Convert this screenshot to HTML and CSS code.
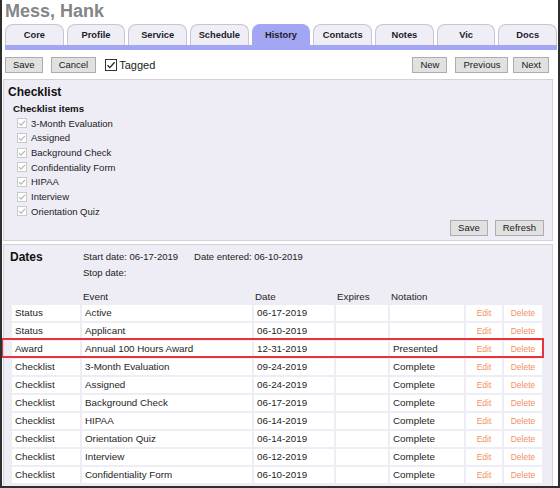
FILE: index.html
```html
<!DOCTYPE html>
<html>
<head>
<meta charset="utf-8">
<link rel="stylesheet" href="styles.css">
</head>
<body>
<div class="frame">
  <h1 class="title">Mess, Hank</h1>
  <nav class="tabs">
    <span class="tab">Core</span>
    <span class="tab">Profile</span>
    <span class="tab">Service</span>
    <span class="tab">Schedule</span>
    <span class="tab active">History</span>
    <span class="tab">Contacts</span>
    <span class="tab">Notes</span>
    <span class="tab">Vic</span>
    <span class="tab">Docs</span>
  </nav>
  <div class="tabbar"></div>

  <div class="toolbar">
    <div class="group">
      <button class="btn">Save</button>
      <button class="btn">Cancel</button>
      <label class="tagged">
        <svg class="cb-tag" width="12" height="12" viewBox="0 0 12 12"><rect x="0.5" y="0.5" width="11" height="11" fill="#fff" stroke="#333"/><path d="M2.5 6.2 L4.8 8.6 L9.6 3.2" fill="none" stroke="#222" stroke-width="1.3"/></svg>
        Tagged
      </label>
    </div>
    <div class="group right">
      <button class="btn">New</button>
      <button class="btn">Previous</button>
      <button class="btn next">Next</button>
    </div>
  </div>

  <section class="panel checklist">
    <h2 class="panel-title">Checklist</h2>
    <h3 class="sub-title">Checklist items</h3>
    <ul class="items">
      <li><svg class="cb" width="10" height="10" viewBox="0 0 10 10"><rect x="0.5" y="0.5" width="9" height="9" fill="#fff" stroke="#c9c9c9"/><path d="M2 5.2 L4 7.2 L8 2.8" fill="none" stroke="#b4b4b4" stroke-width="1.1"/></svg>3-Month Evaluation</li>
      <li><svg class="cb" width="10" height="10" viewBox="0 0 10 10"><rect x="0.5" y="0.5" width="9" height="9" fill="#fff" stroke="#c9c9c9"/><path d="M2 5.2 L4 7.2 L8 2.8" fill="none" stroke="#b4b4b4" stroke-width="1.1"/></svg>Assigned</li>
      <li><svg class="cb" width="10" height="10" viewBox="0 0 10 10"><rect x="0.5" y="0.5" width="9" height="9" fill="#fff" stroke="#c9c9c9"/><path d="M2 5.2 L4 7.2 L8 2.8" fill="none" stroke="#b4b4b4" stroke-width="1.1"/></svg>Background Check</li>
      <li><svg class="cb" width="10" height="10" viewBox="0 0 10 10"><rect x="0.5" y="0.5" width="9" height="9" fill="#fff" stroke="#c9c9c9"/><path d="M2 5.2 L4 7.2 L8 2.8" fill="none" stroke="#b4b4b4" stroke-width="1.1"/></svg>Confidentiality Form</li>
      <li><svg class="cb" width="10" height="10" viewBox="0 0 10 10"><rect x="0.5" y="0.5" width="9" height="9" fill="#fff" stroke="#c9c9c9"/><path d="M2 5.2 L4 7.2 L8 2.8" fill="none" stroke="#b4b4b4" stroke-width="1.1"/></svg>HIPAA</li>
      <li><svg class="cb" width="10" height="10" viewBox="0 0 10 10"><rect x="0.5" y="0.5" width="9" height="9" fill="#fff" stroke="#c9c9c9"/><path d="M2 5.2 L4 7.2 L8 2.8" fill="none" stroke="#b4b4b4" stroke-width="1.1"/></svg>Interview</li>
      <li><svg class="cb" width="10" height="10" viewBox="0 0 10 10"><rect x="0.5" y="0.5" width="9" height="9" fill="#fff" stroke="#c9c9c9"/><path d="M2 5.2 L4 7.2 L8 2.8" fill="none" stroke="#b4b4b4" stroke-width="1.1"/></svg>Orientation Quiz</li>
    </ul>
    <div class="panel-actions">
      <button class="btn">Save</button>
      <button class="btn">Refresh</button>
    </div>
  </section>

  <section class="panel dates">
    <div class="dates-head">
      <h2 class="panel-title dates-title">Dates</h2>
      <div class="info">
        <div class="info-line"><span>Start date: 06-17-2019</span><span class="entered">Date entered: 06-10-2019</span></div>
        <div class="info-line">Stop date:</div>
      </div>
    </div>
    <table class="grid">
      <colgroup>
        <col class="c-type"><col class="c-event"><col class="c-date"><col class="c-exp"><col class="c-note"><col class="c-edit"><col class="c-del">
      </colgroup>
      <thead>
        <tr><th></th><th>Event</th><th>Date</th><th>Expires</th><th>Notation</th><th></th><th></th></tr>
      </thead>
      <tbody>
        <tr><td>Status</td><td>Active</td><td>06-17-2019</td><td></td><td></td><td class="act">Edit</td><td class="act">Delete</td></tr>
        <tr><td>Status</td><td>Applicant</td><td>06-10-2019</td><td></td><td></td><td class="act">Edit</td><td class="act">Delete</td></tr>
        <tr><td>Award</td><td>Annual 100 Hours Award</td><td>12-31-2019</td><td></td><td>Presented</td><td class="act">Edit</td><td class="act">Delete</td></tr>
        <tr><td>Checklist</td><td>3-Month Evaluation</td><td>09-24-2019</td><td></td><td>Complete</td><td class="act">Edit</td><td class="act">Delete</td></tr>
        <tr><td>Checklist</td><td>Assigned</td><td>06-24-2019</td><td></td><td>Complete</td><td class="act">Edit</td><td class="act">Delete</td></tr>
        <tr><td>Checklist</td><td>Background Check</td><td>06-17-2019</td><td></td><td>Complete</td><td class="act">Edit</td><td class="act">Delete</td></tr>
        <tr><td>Checklist</td><td>HIPAA</td><td>06-14-2019</td><td></td><td>Complete</td><td class="act">Edit</td><td class="act">Delete</td></tr>
        <tr><td>Checklist</td><td>Orientation Quiz</td><td>06-14-2019</td><td></td><td>Complete</td><td class="act">Edit</td><td class="act">Delete</td></tr>
        <tr><td>Checklist</td><td>Interview</td><td>06-12-2019</td><td></td><td>Complete</td><td class="act">Edit</td><td class="act">Delete</td></tr>
        <tr><td>Checklist</td><td>Confidentiality Form</td><td>06-10-2019</td><td></td><td>Complete</td><td class="act">Edit</td><td class="act">Delete</td></tr>
      </tbody>
    </table>
    <div class="highlight"></div>
  </section>
</div>
</body>
</html>
```

FILE: styles.css
```css
* { box-sizing: border-box; }
html, body { margin: 0; padding: 0; background: #fff; }
body { font-family: "Liberation Sans", Arial, sans-serif; color: #1e1e1e; }

.frame {
  position: relative;
  width: 560px;
  height: 488px;
  overflow: hidden;
  background: #fff;
  border-left: 2px solid #2e2e2e;
  border-right: 2px solid #2e2e2e;
  border-bottom: 2px solid #2e2e2e;
}

.title {
  margin: 0;
  padding-left: 3px;
  font-size: 18px;
  line-height: 22px;
  font-weight: bold;
  color: #858585;
}

.tabs {
  display: flex;
  gap: 3px;
  margin: 2px 1px 0 3px;
}
.tab {
  flex: 1 1 0;
  height: 21px;
  line-height: 20px;
  text-align: center;
  font-size: 9.3px;
  font-weight: bold;
  color: #1c1c2a;
  background: #efeef6;
  border: 1px solid #c6c6d4;
  border-bottom: none;
  border-radius: 8px 8px 0 0;
}
.tab.active {
  background: #a3a6f3;
  border-color: #a3a6f3;
}
.tabbar {
  height: 5px;
  margin: 0 1px 0 3px;
  background: #a3a6f3;
}

.toolbar {
  display: flex;
  justify-content: space-between;
  align-items: center;
  margin: 7px 9px 0 3px;
  height: 16px;
}
.group { display: flex; align-items: center; gap: 8px; }
.btn {
  font-family: "Liberation Sans", Arial, sans-serif;
  font-size: 9.5px;
  height: 16px;
  line-height: 14px;
  padding: 0 7px;
  margin: 0;
  color: #1a1a1a;
  background: #e1e1e1;
  border: 1px solid #adadad;
  border-radius: 0;
}
.group.right .next { margin-left: -3px; }
.tagged {
  display: flex;
  align-items: center;
  gap: 2px;
  margin-left: 1px;
  font-size: 11px;
  color: #1a1a1a;
}

.panel {
  margin: 0 5px 0 1px;
  background: #eeecf5;
  border: 1px solid #d2d2d8;
}
.checklist {
  margin-top: 6px;
  padding: 4px 8px 4px 4px;
}
.panel-title {
  margin: 0;
  font-size: 12px;
  line-height: 16px;
  font-weight: bold;
  color: #111;
}
.sub-title {
  margin: 2px 0 0 5px;
  font-size: 9.7px;
  line-height: 14px;
  font-weight: bold;
  color: #111;
}
.items {
  list-style: none;
  margin: 0;
  padding: 0 0 0 9px;
}
.items li {
  display: flex;
  align-items: center;
  gap: 4px;
  height: 14.67px;
  font-size: 9.5px;
  color: #222;
}
.panel-actions {
  display: flex;
  justify-content: flex-end;
  gap: 7px;
  margin-top: 1px;
}

.dates {
  position: relative;
  margin-top: 3px;
  padding: 4px 0 0 6px;
  height: 260px;
}
.dates-head { display: flex; }
.dates-title { width: 73px; }
.info { font-size: 9.5px; color: #222; }
.info-line { line-height: 16px; height: 16px; }
.entered { margin-left: 16px; }

.grid {
  margin-top: 5px;
  width: 534px;
  table-layout: fixed;
  border-collapse: separate;
  border-spacing: 2px;
  font-size: 9.8px;
  color: #1e1e1e;
}
.c-type { width: 68px; }
.c-event { width: 170px; }
.c-date { width: 80px; }
.c-exp { width: 52px; }
.c-note { width: 74px; }
.c-edit { width: 36px; }
.c-del { width: 38px; }
.grid th {
  height: 15px;
  padding: 0 1px;
  text-align: left;
  font-weight: normal;
  vertical-align: bottom;
  line-height: 13px;
}
.grid td {
  height: 16px;
  line-height: 16px;
  padding: 0 3px;
  background: #fff;
  white-space: nowrap;
  overflow: hidden;
}
.grid td.act {
  text-align: center;
  padding: 0;
  font-size: 8.5px;
  color: #f39064;
}

.highlight {
  position: absolute;
  left: -3px;
  top: 93px;
  width: 543px;
  height: 20px;
  border: 2px solid #e8333a;
  pointer-events: none;
}
```
